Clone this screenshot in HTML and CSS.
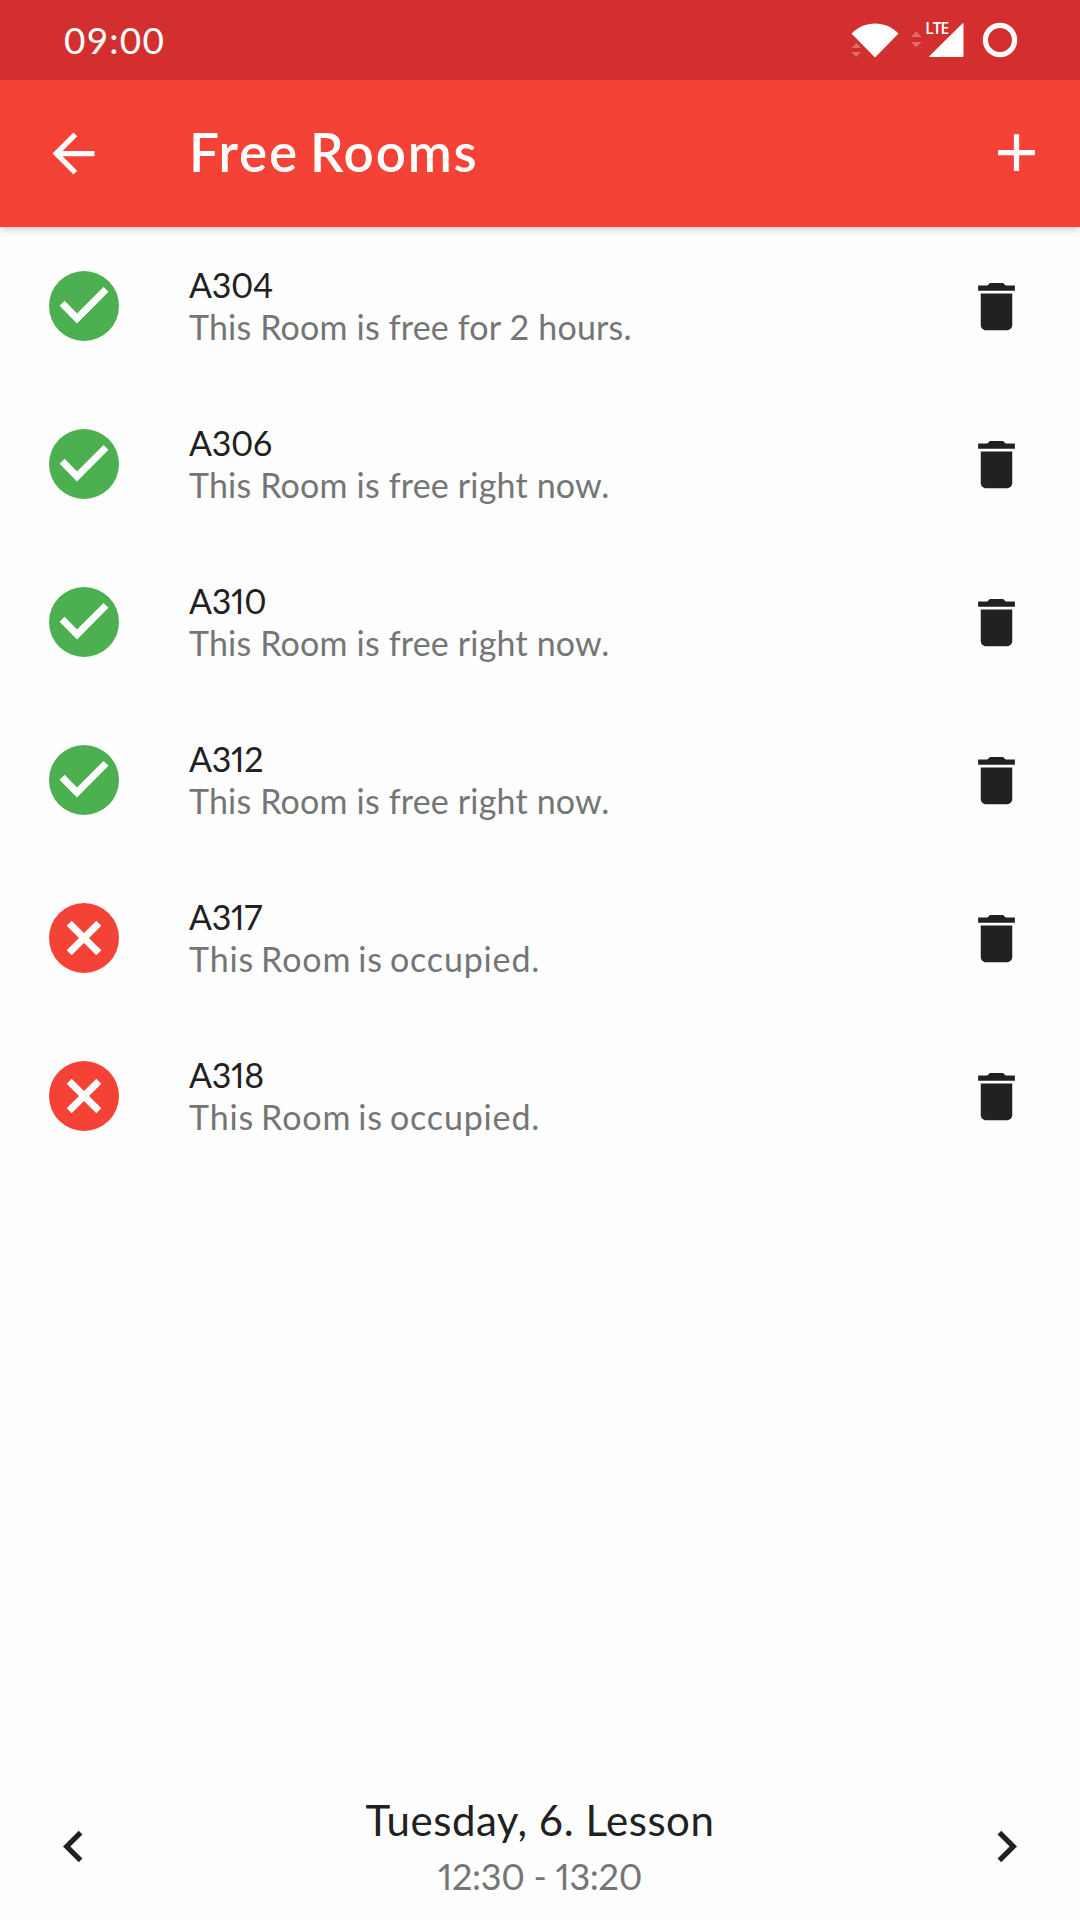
FILE: index.html
```
<!DOCTYPE html>
<html lang="en">
<head>
  <meta charset="utf-8">
  <title>Free Rooms</title>
  <link rel="stylesheet" href="styles.css">
</head>
<body>
  <svg class="sprite" aria-hidden="true">
    <symbol id="free" viewBox="0 0 70 70">
      <circle cx="35" cy="35" r="35" fill="#4caf50"/>
      <path d="M13.1 32.2L28 47.5 57 18.4" fill="none" stroke="#fff" stroke-width="7"/>
    </symbol>
    <symbol id="occupied" viewBox="0 0 70 70">
      <circle cx="35" cy="35" r="35" fill="#f44336"/>
      <path d="M20.200 20.200l29.600 29.600M49.800 20.200L20.200 49.800" fill="none" stroke="#fff" stroke-width="7"/>
    </symbol>
    <symbol id="delete" viewBox="0 0 24 24">
      <path d="M6 19c0 1.100.9 2 2 2h8c1.100 0 2-.9 2-2V7H6v12zM19 4h-3.500l-1-1h-5l-1 1H5v2h14V4z"/>
    </symbol>
  </svg>

  <div class="screen">
    <div class="status-bar">
      <span class="clock">09:00</span>
      <div class="status-icons">
        <svg class="wifi" width="48" height="36" viewBox="0 0 48 36">
          <path d="M.5 26l4.700-5 4.700 5zM.5 30h9.400l-4.700 5z" fill="#fff" fill-opacity=".3"/>
          <path d="M24 35.500L.5 11.500C7 5 15 1.500 24 1.500s17 3.500 23.500 10z" fill="#fff"/>
        </svg>
        <svg class="cell" width="53" height="36" viewBox="0 0 53 36">
          <path d="M0 15l5.300-5.500 5.300 5.500zM0 20h10.600l-5.300 5.500z" fill="#fff" fill-opacity=".3"/>
          <text class="network" x="14.300" y="12.300">LTE</text>
          <path d="M52 1.500v33H18.500z" fill="#fff" stroke="#fff" stroke-linejoin="round"/>
        </svg>
        <svg class="battery" width="36" height="36" viewBox="0 0 36 36">
          <circle cx="18" cy="18" r="14.600" fill="none" stroke="#fff" stroke-width="5.200"/>
        </svg>
      </div>
    </div>

    <header class="app-bar">
      <svg class="icon" viewBox="0 0 24 24"><path d="M20 11H7.830l5.590-5.590L12 4l-8 8 8 8 1.410-1.410L7.830 13H20v-2z"/></svg>
      <h1 class="title">Free Rooms</h1>
      <svg class="icon add" viewBox="0 0 24 24"><path d="M19 13h-6v6h-2v-6H5v-2h6V5h2v6h6v2z"/></svg>
    </header>

    <main class="rooms">
      <div class="room">
        <svg class="state"><use href="#free"/></svg>
        <div class="info"><div class="name">A304</div><div class="detail">This Room is free for 2 hours.</div></div>
        <svg class="icon"><use href="#delete"/></svg>
      </div>
      <div class="room">
        <svg class="state"><use href="#free"/></svg>
        <div class="info"><div class="name">A306</div><div class="detail">This Room is free right now.</div></div>
        <svg class="icon"><use href="#delete"/></svg>
      </div>
      <div class="room">
        <svg class="state"><use href="#free"/></svg>
        <div class="info"><div class="name">A310</div><div class="detail">This Room is free right now.</div></div>
        <svg class="icon"><use href="#delete"/></svg>
      </div>
      <div class="room">
        <svg class="state"><use href="#free"/></svg>
        <div class="info"><div class="name">A312</div><div class="detail">This Room is free right now.</div></div>
        <svg class="icon"><use href="#delete"/></svg>
      </div>
      <div class="room">
        <svg class="state"><use href="#occupied"/></svg>
        <div class="info"><div class="name">A317</div><div class="detail loose">This Room is occupied.</div></div>
        <svg class="icon"><use href="#delete"/></svg>
      </div>
      <div class="room">
        <svg class="state"><use href="#occupied"/></svg>
        <div class="info"><div class="name">A318</div><div class="detail loose">This Room is occupied.</div></div>
        <svg class="icon"><use href="#delete"/></svg>
      </div>
    </main>

    <footer class="lesson-bar">
      <svg class="icon" viewBox="0 0 24 24"><path d="M15.410 7.410L14 6l-6 6 6 6 1.410-1.410L10.830 12z"/></svg>
      <div class="lesson">
        <div class="lesson-name">Tuesday, 6. Lesson</div>
        <div class="lesson-time">12:30 - 13:20</div>
      </div>
      <svg class="icon" viewBox="0 0 24 24"><path d="M10 6L8.590 7.410 13.170 12l-4.580 4.590L10 18l6-6z"/></svg>
    </footer>
  </div>
</body>
</html>
```
FILE: styles.css
```
* {
  box-sizing: border-box;
}

body {
  margin: 0;
  font-family: Lato, "Open Sans", sans-serif;
  color: #212121;
  background: #fefefe;
}

.sprite {
  display: none;
}

.screen {
  display: flex;
  flex-direction: column;
  height: 1920px;
}

.icon {
  flex: none;
  width: 63px;
  height: 63px;
  fill: currentColor;
}

/* Status bar */
.status-bar {
  display: flex;
  align-items: center;
  justify-content: space-between;
  height: 80px;
  padding: 0 62px 0 64px;
  color: #fff;
  background: #d32f2f;
}

.clock {
  font-size: 37px;
  line-height: 46px;
  letter-spacing: 1.2px;
  padding-bottom: 1px;
}

.status-icons {
  display: flex;
  align-items: center;
}

.cell {
  margin-left: 12px;
  overflow: visible;
}

.battery {
  margin-left: 18px;
}

.network {
  font: 600 15.5px "Open Sans", sans-serif;
  letter-spacing: -1px;
  fill: #fff;
}

/* App bar */
.app-bar {
  display: flex;
  align-items: center;
  height: 147px;
  padding: 0 32px 0 42px;
  color: #fff;
  background: #f44336;
  box-shadow: 0 2px 8px rgba(0, 0, 0, .22);
  clip-path: inset(0 0 -12px 0);
}

.title {
  flex: 1;
  margin: 0 0 0 84px;
  padding-bottom: 3px;
  font-size: 53px;
  font-weight: 600;
  line-height: 64px;
  letter-spacing: 1.8px;
  word-spacing: -4px;
}

.add {
  margin-bottom: 2px;
}

/* Room list */
.rooms {
  flex: 1;
}

.room {
  display: flex;
  align-items: center;
  height: 158px;
  padding: 0 52px 0 49px;
}

.state {
  flex: none;
  width: 70px;
  height: 70px;
}

.info {
  flex: 1;
  margin-left: 70px;
  font-size: 34px;
  line-height: 42px;
}

.name {
  letter-spacing: -.3px;
  font-variant-numeric: proportional-nums;
}

.detail {
  letter-spacing: .18px;
  color: #757575;
}

.detail.loose {
  letter-spacing: .85px;
  word-spacing: -2.500px;
}

/* Lesson selector */
.lesson-bar {
  display: flex;
  align-items: center;
  justify-content: space-between;
  height: 147px;
  padding: 0 42px;
}

.lesson {
  padding-top: 4px;
  text-align: center;
}

.lesson-name {
  margin-bottom: 5px;
  font-size: 42px;
  line-height: 50px;
  letter-spacing: .53px;
}

.lesson-time {
  font-size: 36px;
  line-height: 52px;
  letter-spacing: -.3px;
  font-variant-numeric: proportional-nums;
  color: #757575;
}
```
